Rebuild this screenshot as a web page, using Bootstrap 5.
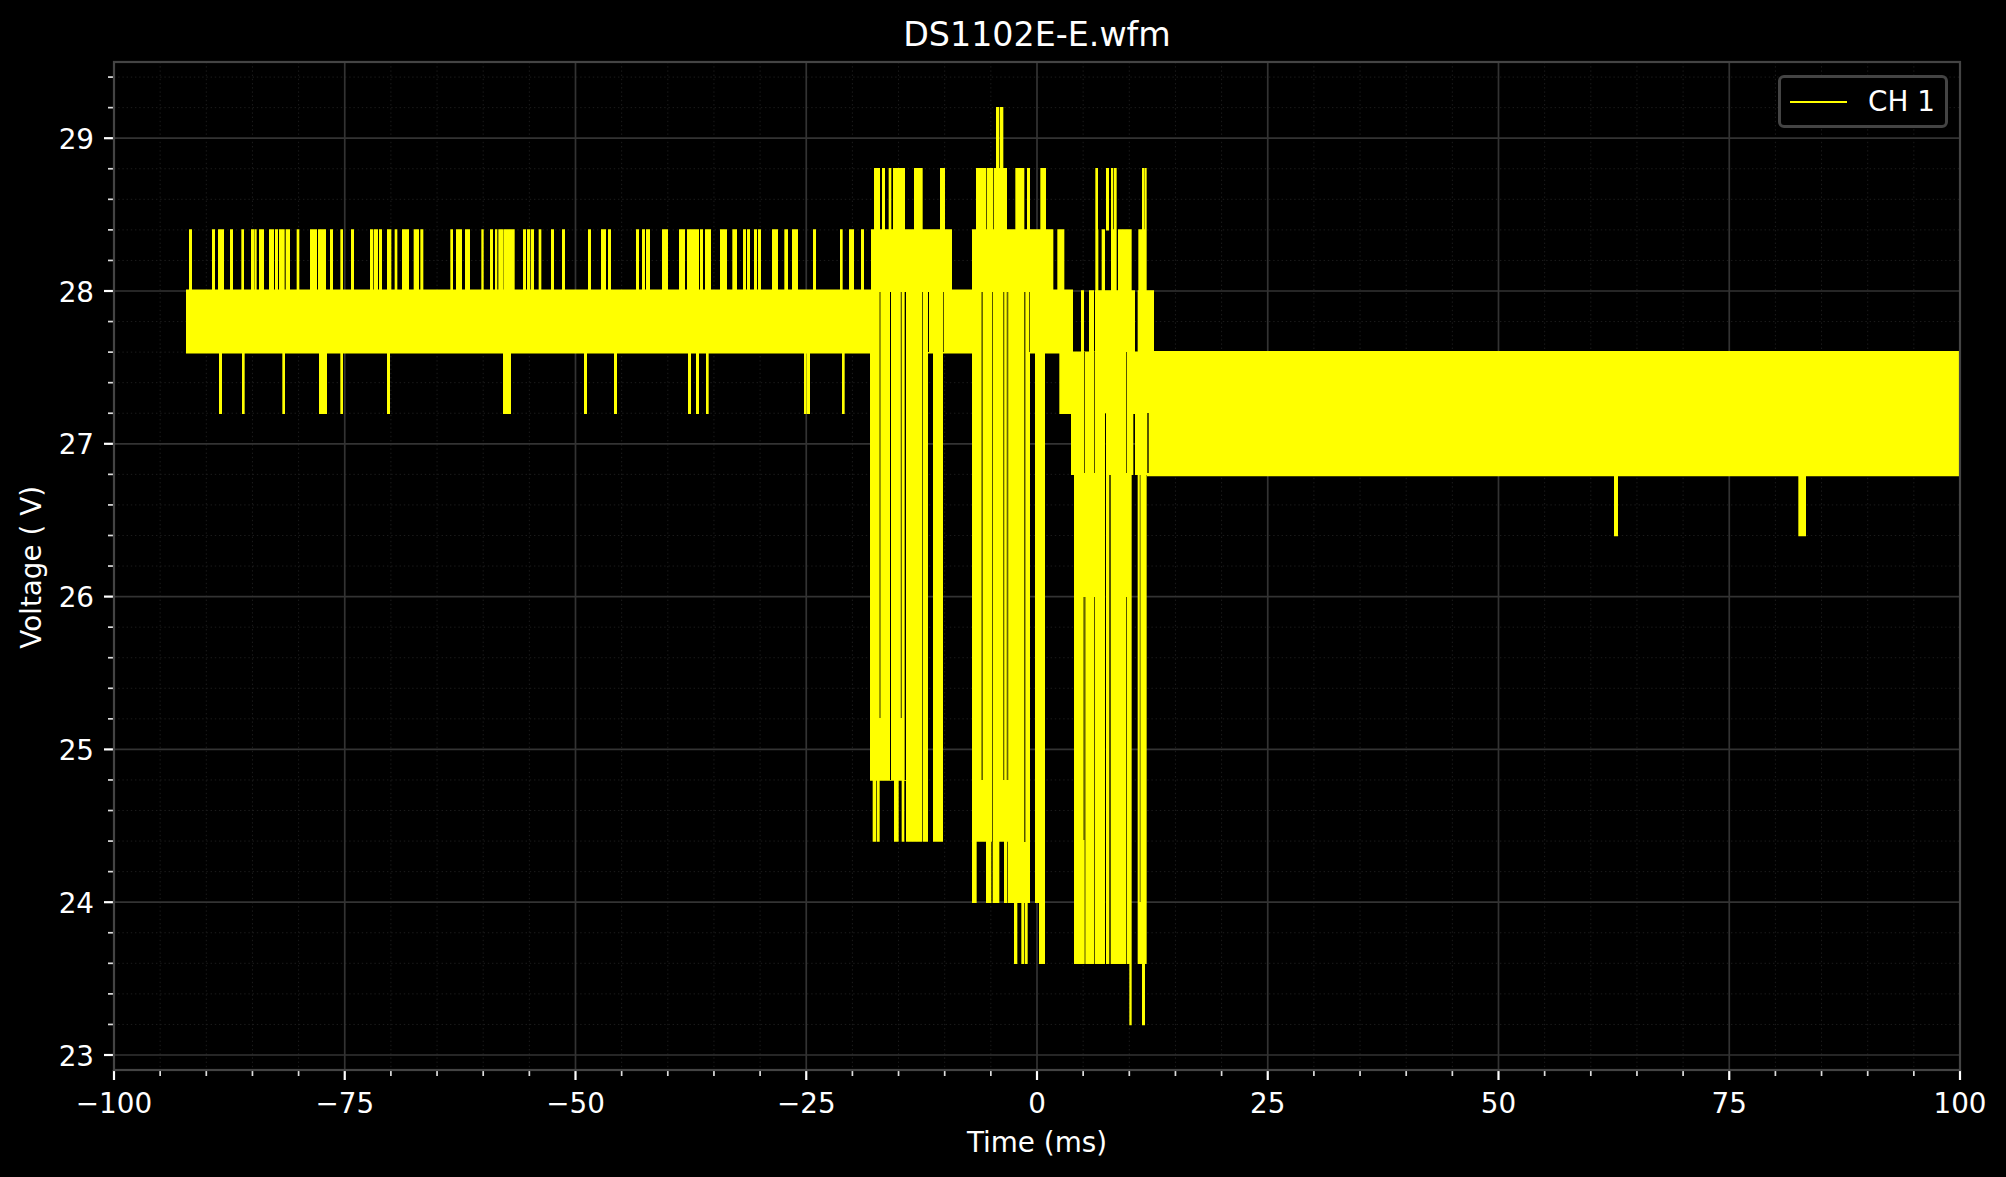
<!DOCTYPE html>
<html lang="en">
<head>
  <meta charset="utf-8">
  <title>DS1102E-E.wfm</title>
  <link rel="stylesheet" href="https://cdn.jsdelivr.net/npm/bootstrap@5.3.0/dist/css/bootstrap.min.css">
  <style>
    body {
      background-color: #000;
      color: #fff;
      font-family: "DejaVu Sans", sans-serif;
    }
    .figure-box {
      width: 2006px;
      height: 1177px;
    }
    .plot-title {
      height: 48px;
      padding-left: 68px;
      font-size: 33.3px;
      font-weight: 400;
      line-height: 70px;
    }
    .y-label {
      width: 48px;
      padding-bottom: 42px;
      font-size: 27.8px;
    }
    .y-label span {
      margin-left: 16px;
      writing-mode: vertical-rl;
      transform: rotate(180deg);
    }
    .x-label {
      height: 49px;
      padding-left: 68px;
      font-size: 27.8px;
      line-height: 30px;
    }
    .plot-svg text {
      fill: #fff;
      font-family: "DejaVu Sans", sans-serif;
      font-size: 27.8px;
    }
    .plot-legend {
      top: 27px;
      right: 58px;
      width: 170px;
      height: 53px;
      padding-left: 9px;
      gap: 21px;
      font-size: 27.8px;
      background-color: #000;
      border: 3px solid #444;
      border-radius: 6px;
    }
    .legend-line {
      width: 57px;
      height: 2px;
      background-color: #ff0;
    }
  </style>
</head>
<body>
<main class="figure-box d-flex flex-column">
  <h1 class="plot-title text-center m-0">DS1102E-E.wfm</h1>

  <div class="d-flex flex-grow-1">
    <div class="y-label d-flex align-items-center justify-content-center">
      <span>Voltage ( V)</span>
    </div>
    <div class="position-relative flex-grow-1">
      <!-- viewBox uses page coordinates -->
      <svg id="plot" class="plot-svg d-block" width="1958" height="1080" viewBox="48 48 1958 1080" xmlns="http://www.w3.org/2000/svg"></svg>
      <div class="plot-legend position-absolute d-flex align-items-center">
        <span class="legend-line"></span>
        <span>CH 1</span>
      </div>
    </div>
  </div>

  <div class="x-label text-center">Time (ms)</div>
</main>

<script>
  const LEFT = 114, RIGHT = 1960, TOP = 62, BOTTOM = 1070;
  const xPos = t => LEFT + (t + 100) * 9.23;
  const yPos = v => 291 - (v - 28) * 152.8;
  const svg = document.getElementById("plot");
  let out = "";

  function line(x1, y1, x2, y2, color, width, dash) {
    out += `<line x1="${x1}" y1="${y1}" x2="${x2}" y2="${y2}" stroke="${color}" stroke-width="${width}"` +
      (dash ? ` stroke-dasharray="${dash}"` : "") + `/>`;
  }

  // minor grid and ticks
  for (let t = -100; t <= 100; t += 5) {
    if (t % 25 === 0) continue;
    line(xPos(t), TOP, xPos(t), BOTTOM, "#1c1c1c", 1, "1.4 2.8");
    line(xPos(t), BOTTOM, xPos(t), BOTTOM + 6, "#ddd", 1.7);
  }
  for (let i = 0; i <= 32; i++) {
    const v = 23 + i * 0.2;
    const y = yPos(v);
    if (i % 5 !== 0) {
      line(LEFT, y, RIGHT, y, "#1c1c1c", 1, "1.4 2.8");
      line(LEFT - 6, y, LEFT, y, "#ddd", 1.7);
    }
  }

  // major grid, ticks and labels
  for (let t = -100; t <= 100; t += 25) {
    line(xPos(t), TOP, xPos(t), BOTTOM, "#333", 1.7);
    line(xPos(t), BOTTOM, xPos(t), BOTTOM + 10, "#fff", 2.2);
    const label = t < 0 ? "\u2212" + (-t) : t;
    out += `<text x="${xPos(t)}" y="1113" text-anchor="middle">${label}</text>`;
  }
  for (let v = 23; v <= 29; v++) {
    line(LEFT, yPos(v), RIGHT, yPos(v), "#333", 1.7);
    line(LEFT - 10, yPos(v), LEFT, yPos(v), "#fff", 2.2);
    out += `<text x="94" y="${yPos(v) + 10.5}" text-anchor="end">${v}</text>`;
  }

  // signal trace, one block per column [x1, x2] between two voltages
  let trace = "", dark = "", dim = "";
  const box = (x1, x2, y1, y2) => `M${x1} ${y1}H${x2}V${y2}H${x1}Z`;
  const add = (ox, cols, v1, v2) => cols.forEach(c => {
    trace += box(ox + c[0] / 3, ox + c[1] / 3, yPos(v1) - 0.7, yPos(v2) + 0.7);
  });

  // flat bands
  trace += box(186, 1073, yPos(28) - 1.5, yPos(27.6) + 1.3);
  trace += box(1147, 1959, yPos(27.6) - 1, yPos(26.8) + 1.8);

  // spikes up from the first band
  add(170, [[57,66],[126,135],[144,162],[180,189],[214,222],[243,252],[253,260],[267,282],[297,312],[315,324],[327,344],[347,360],[380,388],[420,441],[444,468],[480,489],[511,519],[543,552],[600,609],[611,624],[627,636],[651,664],[674,682],[696,717],[731,747],[751,760],[841,849],[858,876],[885,900],[934,941],[960,969],[975,982],[985,1000]], 28.4, 28);
  add(500, [[0,9],[11,44],[69,78],[81,90],[92,102],[116,124],[153,162],[186,195],[264,273],[303,318],[324,333],[408,417],[426,435],[438,450],[486,504],[537,555],[561,597],[600,609],[615,633],[660,681],[697,711],[729,738],[741,750],[762,771],[774,783],[816,834],[853,864],[876,894],[939,948],[1020,1028],[1047,1062],[1084,1092]], 28.4, 28);

  // spikes down from the first band
  add(170, [[147,156],[216,224],[337,345],[447,471],[511,519],[651,660]], 27.6, 27.2);
  add(500, [[9,33],[252,261],[342,351],[564,573],[588,597],[618,626],[912,920],[921,930],[1026,1034]], 27.6, 27.2);

  // central bursts, columns in pixels from x = 840
  add(840, [[0,7],[27,42],[63,72],[652,673],[766,775],[785,795],[813,830],[834,875],[895,920]], 28.4, 28);
  add(840, [[93,336],[396,640]], 28.4, 28);
  add(840, [[102,120],[126,135],[146,154],[159,195],[222,248],[300,315],[408,438],[440,460],[462,501],[526,553],[561,570],[601,618],[766,774],[798,807],[813,820],[822,830],[906,912],[913,920]], 28.8, 28.4);
  add(840, [[468,478],[480,490]], 29.2, 28.8);
  add(840, [[723,732],[747,762],[765,885],[893,942]], 28, 27.6);
  add(840, [[90,264],[279,309],[396,570],[585,615]], 27.6, 24.8);
  add(840, [[658,1000]], 27.6, 27.2);
  add(840, [[693,795],[798,880],[885,930]], 27.2, 26.8);
  add(840, [[702,795],[798,875],[893,920]], 26.8, 23.6);
  add(840, [[98,108],[110,119],[162,176],[185,193],[198,264],[279,309]], 24.8, 24.4);
  add(840, [[396,490],[490,570],[585,615]], 24.8, 24.4);
  add(840, [[396,410],[438,454],[458,478],[492,502],[504,570],[585,615]], 24.4, 24);
  add(840, [[522,532],[544,553],[555,563],[597,615]], 24, 23.6);
  add(840, [[868,875],[906,915]], 23.6, 23.2);
  // isolated spikes on the second band
  add(1550, [[192,204],[745,768]], 26.8, 26.4);

  // gaps between the columns, black or half covered
  const gap = (cols, y1, y2, list) => cols.forEach(c => {
    const s = box(840 + c[0] / 3, 840 + c[1] / 3, y1, y2);
    if (list === "dim") dim += s; else dark += s;
  });
  gap([[150,153],[194,198]], 292, 780);
  gap([[247,249],[457,459],[553,556]], 292, 842);
  gap([[264,267],[310,312],[568,570]], 292, 352);
  gap([[118,122],[182,186]], 292, 718, "dim");
  gap([[424,429],[500,505]], 292, 780, "dim");
  gap([[489,493]], 292, 780, "dim");
  gap([[733,735],[763,765],[858,860]], 352, 473);
  gap([[796,798]], 413, 964);
  gap([[922,926]], 413, 473);
  gap([[763,765],[734,736],[808,812],[858,860]], 597, 964);
  gap([[808,812]], 475, 597);
  gap([[730,734]], 597, 840, "dim");
  gap([[899,902]], 475, 902, "dim");

  out += `<path d="${trace}" fill="#ff0"/>`;
  out += `<path d="${dim}" fill="#000" fill-opacity="0.6"/>`;
  out += `<path d="${dark}" fill="#000"/>`;

  // spines
  out += `<rect x="${LEFT}" y="${TOP}" width="${RIGHT - LEFT}" height="${BOTTOM - TOP}" fill="none" stroke="#444" stroke-width="2.2"/>`;
  svg.innerHTML = out;
</script>
<script src="https://cdn.jsdelivr.net/npm/bootstrap@5.3.0/dist/js/bootstrap.bundle.min.js"></script>
</body>
</html>
